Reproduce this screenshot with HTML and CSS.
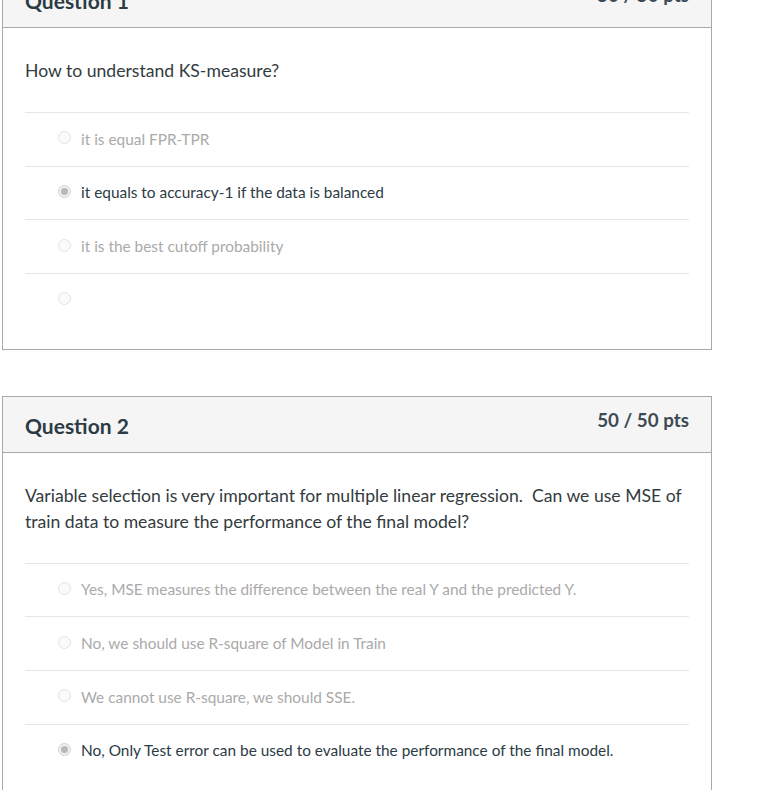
FILE: index.html
```html
<!DOCTYPE html>
<html>
<head>
<meta charset="utf-8">
<link rel="stylesheet" href="styles.css">
</head>
<body>
<div class="page">
  <div class="question">
    <div class="q-header">
      <span class="q-title">Question 1</span>
      <span class="q-pts">50 / 50 pts</span>
    </div>
    <div class="q-body">
      <div class="q-text">How to understand KS-measure?</div>
      <div class="answers">
        <div class="answer"><span class="radio"></span><span class="a-text">it is equal FPR-TPR</span></div>
        <div class="answer selected"><span class="radio"></span><span class="a-text">it equals to accuracy-1 if the data is balanced</span></div>
        <div class="answer"><span class="radio"></span><span class="a-text">it is the best cutoff probability</span></div>
        <div class="answer"><span class="radio"></span><span class="a-text"></span></div>
      </div>
    </div>
  </div>

  <div class="question">
    <div class="q-header">
      <span class="q-title">Question 2</span>
      <span class="q-pts">50 / 50 pts</span>
    </div>
    <div class="q-body">
      <div class="q-text">Variable selection is very important for multiple linear regression.&nbsp; Can we use MSE of train data to measure the performance of the final model?</div>
      <div class="answers">
        <div class="answer"><span class="radio"></span><span class="a-text">Yes, MSE measures the difference between the real Y and the predicted Y.</span></div>
        <div class="answer"><span class="radio"></span><span class="a-text">No, we should use R-square of Model in Train</span></div>
        <div class="answer"><span class="radio"></span><span class="a-text">We cannot use R-square, we should SSE.</span></div>
        <div class="answer selected"><span class="radio"></span><span class="a-text">No, Only Test error can be used to evaluate the performance of the final model.</span></div>
      </div>
    </div>
  </div>
</div>
</body>
</html>
```

FILE: styles.css
```css
html, body {
  margin: 0;
  padding: 0;
  background: #fff;
}
body {
  font-family: Lato, "Open Sans", sans-serif;
  color: #2d3b45;
  overflow: hidden;
}
.page {
  margin-top: -29px;
  margin-left: 2px;
  width: 710px;
  display: flex;
  flex-direction: column;
  gap: 46px;
}
.question {
  border: 1px solid #a8a8a8;
  background: #fff;
}
.q-header {
  background: #f5f5f5;
  border-bottom: 1px solid #a8a8a8;
  height: 55px;
  padding: 0 22px;
  display: flex;
  justify-content: space-between;
  align-items: flex-start;
}
.q-title {
  font-size: 21px;
  font-weight: 700;
  margin-top: 15px;
  line-height: 28px;
}
.q-pts {
  font-size: 18.8px;
  font-weight: 700;
  color: #3d4a54;
  margin-top: 10px;
  line-height: 26px;
}
.q-body {
  padding: 30px 22px 22px;
}
.q-text {
  font-size: 17.6px;
  line-height: 26px;
  margin-bottom: 28px;
  color: #333b40;
}
.answers {
  display: flex;
  flex-direction: column;
}
.answer {
  border-top: 1px solid #e6e6e6;
  box-sizing: border-box;
  height: 53.67px;
  display: flex;
  align-items: center;
  padding: 0 0 1px 33px;
  gap: 10px;
  font-size: 15.4px;
  color: #aaaaaa;
}
.answer.selected {
  color: #2d3b45;
}
.radio {
  width: 11px;
  height: 11px;
  border-radius: 50%;
  border: 1px solid #e3e3e3;
  background: #fafafa;
  position: relative;
  flex: none;
  margin-top: -2px;
}
.answer.selected .radio {
  border-color: #d2d2d2;
  background: #f0f0f0;
}
.answer.selected .radio::after {
  content: "";
  position: absolute;
  left: 2px;
  top: 2px;
  width: 7px;
  height: 7px;
  border-radius: 50%;
  background: #b8b8b8;
}
```
